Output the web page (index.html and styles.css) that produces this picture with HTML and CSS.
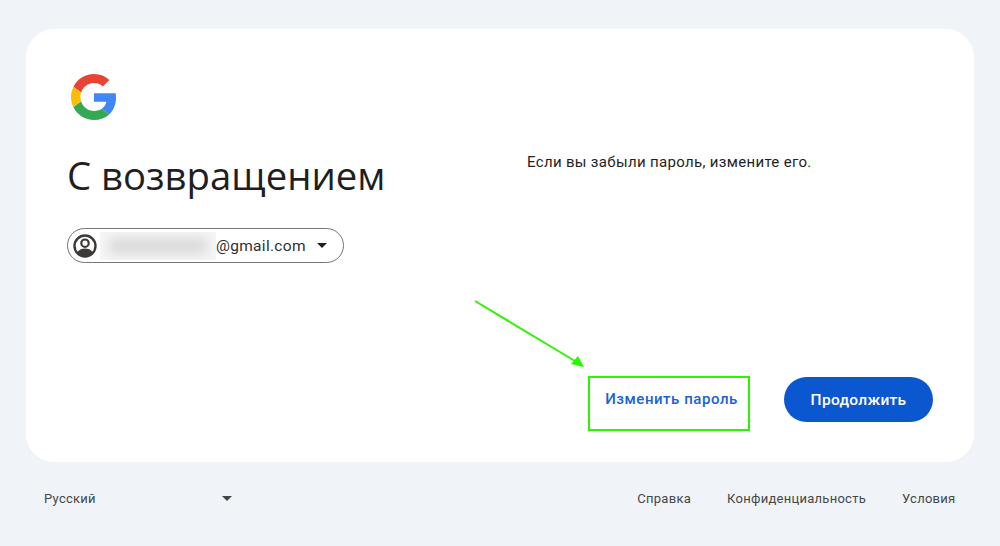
FILE: index.html
```html
<!DOCTYPE html>
<html lang="ru">
<head>
<meta charset="utf-8">
<title>С возвращением</title>
<link rel="stylesheet" href="styles.css">
</head>
<body>
<main class="card">
  <div class="columns">
    <section class="left">
      <svg class="logo" viewBox="0 0 48 48" aria-hidden="true">
        <path fill="#EA4335" d="M24 9.5c3.54 0 6.71 1.22 9.21 3.6l6.85-6.85C35.9 2.38 30.47 0 24 0 14.62 0 6.51 5.38 2.56 13.22l7.98 6.19C12.43 13.72 17.74 9.5 24 9.5z"/>
        <path fill="#4285F4" d="M46.98 24.55c0-1.57-.15-3.09-.38-4.55H24v9.02h12.94c-.58 2.96-2.26 5.48-4.78 7.18l7.73 6c4.51-4.18 7.09-10.36 7.09-17.65z"/>
        <path fill="#FBBC05" d="M10.53 28.59c-.48-1.45-.76-2.99-.76-4.59s.27-3.14.76-4.59l-7.98-6.19C.92 16.46 0 20.12 0 24c0 3.88.92 7.54 2.56 10.78l7.97-6.19z"/>
        <path fill="#34A853" d="M24 48c6.48 0 11.93-2.13 15.89-5.81l-7.73-6c-2.15 1.45-4.92 2.3-8.16 2.3-6.26 0-11.57-4.22-13.47-9.91l-7.98 6.19C6.51 42.62 14.62 48 24 48z"/>
      </svg>
      <h1 class="title">С возвращением</h1>
      <div class="account">
        <svg class="avatar" viewBox="0 0 24 24" aria-hidden="true">
          <circle cx="12" cy="12" r="10.500" fill="#fff" stroke="#3c3a39" stroke-width="2.400"/>
          <circle cx="12" cy="9.200" r="3.700" fill="#fff" stroke="#3c3a39" stroke-width="2.200"/>
          <path fill="#3c3a39" d="M4.400 18.200C6.200 15.400 9 14.400 12 14.400s5.800 1 7.600 3.800C17.600 20.800 15 22 12 22s-5.600-1.200-7.600-3.800z"/>
        </svg>
        <span class="mask"><span class="mask-blur"></span></span>
        <span class="email">@gmail.com</span>
        <span class="caret caret-dark"></span>
      </div>
    </section>
    <section class="right">
      <p class="hint">Если вы забыли пароль, измените его.</p>
    </section>
  </div>
  <div class="actions">
    <a class="link-btn">Изменить пароль</a>
    <a class="primary-btn">Продолжить</a>
  </div>
  <svg class="arrow" viewBox="0 0 120 80" aria-hidden="true">
    <line x1="1" y1="1" x2="101" y2="61" stroke="#2bf500" stroke-width="2"/>
    <polygon points="110,67 97,64 104,56" fill="#2bf500"/>
  </svg>
</main>
<footer class="footer">
  <div class="lang">
    <span>Русский</span>
    <span class="caret"></span>
  </div>
  <nav class="links">
    <a>Справка</a>
    <a>Конфиденциальность</a>
    <a>Условия</a>
  </nav>
</footer>
</body>
</html>
```
FILE: styles.css
```css
* { box-sizing: border-box; }
html, body { height: 100%; }
body {
  margin: 0;
  background: #f0f4f9;
  padding: 29px 26px 0;
  font-family: "Roboto", "Liberation Sans", sans-serif;
  color: #1f1f1f;
  overflow: hidden;
}
.card {
  position: relative;
  height: 433px;
  background: #fff;
  border-radius: 28px;
  padding: 45px 41px 31px 41px;
  display: flex;
  flex-direction: column;
  justify-content: space-between;
}
.columns { display: grid; grid-template-columns: 460px 1fr; }
.left { display: flex; flex-direction: column; align-items: flex-start; }
.logo { width: 46px; height: 46px; margin-left: 4px; display: block; }
.title {
  margin: 31px 0 0;
  font-size: 38.300px;
  line-height: 48px;
  font-weight: 400;
  font-family: "Open Sans", sans-serif;
  color: #1f1f1f;
}
.account {
  margin-top: 29px;
  width: 277px;
  height: 35px;
  border: 1px solid #747775;
  border-radius: 18px;
  display: flex;
  align-items: center;
  padding-left: 5px;
}
.avatar { width: 24px; height: 24px; flex: none; }
.mask { width: 116px; height: 28px; margin-left: 3px; background: #f6f6f6; overflow: hidden; display: flex; align-items: center; justify-content: center; }
.mask-blur { width: 98px; height: 16px; background: #d9d9d9; filter: blur(6px); }
.email { font-size: 15.500px; letter-spacing: .3px; color: #303030; }
.caret {
  width: 0; height: 0;
  border-left: 5px solid transparent;
  border-right: 5px solid transparent;
  border-top: 5px solid #444;
}
.caret-dark { margin-left: 11px; border-top-color: #1f1f1f; }
.right { padding-top: 78px; }
.hint { margin: 0; font-size: 15px; letter-spacing: .33px; line-height: 20px; color: #1f1f1f; }
.actions { display: flex; justify-content: flex-end; align-items: flex-start; gap: 34px; }
.link-btn {
  width: 162px; height: 55px;
  border: 2px solid #2bf500;
  padding: 0 0 9px 5px;
  display: flex; align-items: center; justify-content: center;
  font-size: 15px; font-weight: 500; color: #1a62d6;
  letter-spacing: .55px;
}
.primary-btn {
  width: 149px; height: 45px;
  margin-top: 1px;
  background: #0b57d0; color: #fff;
  border-radius: 23px;
  display: flex; align-items: center; justify-content: center;
  font-size: 15.500px; font-weight: 500; letter-spacing: .3px;
}
.arrow { position: absolute; left: 448px; top: 271px; width: 120px; height: 80px; }
.footer {
  display: flex; justify-content: space-between; align-items: center;
  padding: 29px 18.500px 0 18px;
  font-size: 13px; letter-spacing: .27px; color: #444746;
}
.lang { display: flex; align-items: center; width: 188px; justify-content: space-between; }
.links { display: flex; gap: 36px; }
```
